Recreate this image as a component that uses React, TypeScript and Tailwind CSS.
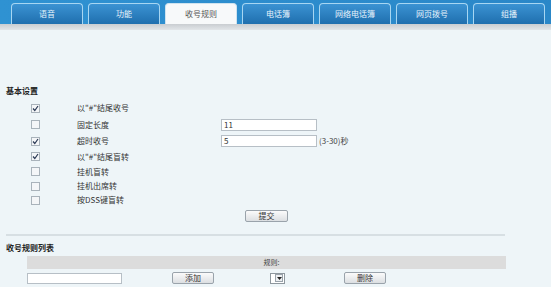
import React from "react";

const tabs = ["语音", "功能", "收号规则", "电话簿", "网络电话簿", "网页拨号", "组播"];

function Check({ on }: { on: boolean }) {
  return (
    <div className="w-[9px] h-[9px] border border-[#a9b3bb] bg-[#f4f6f8] flex items-center justify-center">
      {on && (
        <svg width="7" height="7" viewBox="0 0 7 7">
          <path d="M1 3.5 L2.8 5.5 L6 1" stroke="#2b3a55" strokeWidth="1.2" fill="none" />
        </svg>
      )}
    </div>
  );
}

function Btn({ label, w }: { label: string; w: string }) {
  return (
    <div
      className={`${w} h-[12px] border border-[#9aa3ab] rounded-[2px] bg-gradient-to-b from-[#fbfbfb] to-[#dcdfe2] flex items-center justify-center text-[8px] leading-none text-[#333]`}
    >
      {label}
    </div>
  );
}

export default function App() {
  const rows: { on: boolean; label: string; extra?: React.ReactNode; h: string }[] = [
    { on: true, label: "以\"#\"结尾收号", h: "h-[16px]" },
    {
      on: false,
      label: "固定长度",
      h: "h-[17px]",
      extra: (
        <div className="w-[96px] h-[12px] border border-[#b7bfc6] bg-white text-[8px] leading-[10px] pl-[2px] text-[#333]">11</div>
      ),
    },
    {
      on: true,
      label: "超时收号",
      h: "h-[16px]",
      extra: (
        <div className="flex items-center gap-[2px]">
          <div className="w-[96px] h-[12px] border border-[#b7bfc6] bg-white text-[8px] leading-[10px] pl-[2px] text-[#333]">5</div>
          <span className="text-[8px] text-[#444]">(3-30)秒</span>
        </div>
      ),
    },
    { on: true, label: "以\"#\"结尾盲转", h: "h-[15px]" },
    { on: false, label: "挂机盲转", h: "h-[15px]" },
    { on: false, label: "挂机出席转", h: "h-[14px]" },
    { on: false, label: "按DSS键盲转", h: "h-[14px]" },
  ];

  return (
    <div
      className="w-[551px] h-[287px] bg-[#eef5f8] overflow-hidden flex flex-col"
      style={{ fontFamily: '"Noto Sans CJK SC", "Liberation Sans", sans-serif' }}
    >
      {/* top tab bar */}
      <div className="h-[24px] bg-gradient-to-r from-[#2f92d2] to-[#2a87c8] flex items-end pl-[11px] gap-[5px]">
        {tabs.map((t) => {
          const active = t === "收号规则";
          return (
            <div
              key={t}
              className={
                active
                  ? "w-[72px] h-[21px] rounded-t-[4px] bg-[#f7f9fa] border border-b-0 border-[#cfe3ef] flex items-center justify-center text-[8px] text-[#555]"
                  : "w-[72px] h-[21px] rounded-t-[4px] bg-gradient-to-b from-[#3b93d3] to-[#1f6fae] border border-b-0 border-[#a7d6f2] flex items-center justify-center text-[8px] text-[#e8f3fb]"
              }
            >
              {t}
            </div>
          );
        })}
      </div>
      <div className="h-[6px] bg-gradient-to-b from-[#c9cdd1] to-[#e2e6e9]" />

      {/* basic settings */}
      <div className="pl-[6px] pt-[56px] text-[8px] font-bold text-[#222] leading-[10px]">基本设置</div>
      <div className="flex flex-col pt-[4px]">
        {rows.map((r, i) => (
          <div key={i} className={`${r.h} flex items-center`}>
            <div className="w-[31px]" />
            <Check on={r.on} />
            <div className="w-[37px]" />
            <div className="w-[144px] text-[8px] text-[#333] leading-none">{r.label}</div>
            {r.extra}
          </div>
        ))}
      </div>
      <div className="flex pl-[245px] pt-[3px]">
        <Btn label="提交" w="w-[43px]" />
      </div>
      <div className="mt-[12px] ml-[6px] w-[499px] h-[2px] bg-[#d7dfe3]" />

      {/* list */}
      <div className="pl-[6px] pt-[7px] text-[8px] font-bold text-[#222] leading-[10px]">收号规则列表</div>
      <div className="ml-[27px] mt-[3px] w-[479px] h-[13px] bg-[#dcdcdc] flex items-center justify-center text-[7px] text-[#444]">
        <span className="ml-[10px]">规则:</span>
      </div>
      <div className="flex items-center ml-[27px] mt-[3px] h-[12px]">
        <div className="w-[95px] h-[11px] border border-[#b7bfc6] bg-white" />
        <div className="w-[50px]" />
        <Btn label="添加" w="w-[42px]" />
        <div className="w-[56px]" />
        <div className="w-[15px] h-[11px] border border-[#8e979e] bg-white flex items-center justify-end pr-[1px]">
          <div className="w-[8px] h-[8px] border border-[#9aa3ab] bg-[#eef0f2] flex items-center justify-center">
            <svg width="5" height="3" viewBox="0 0 5 3">
              <path d="M0 0 L5 0 L2.5 3 Z" fill="#222" />
            </svg>
          </div>
        </div>
        <div className="w-[59px]" />
        <Btn label="删除" w="w-[42px]" />
      </div>
    </div>
  );
}
